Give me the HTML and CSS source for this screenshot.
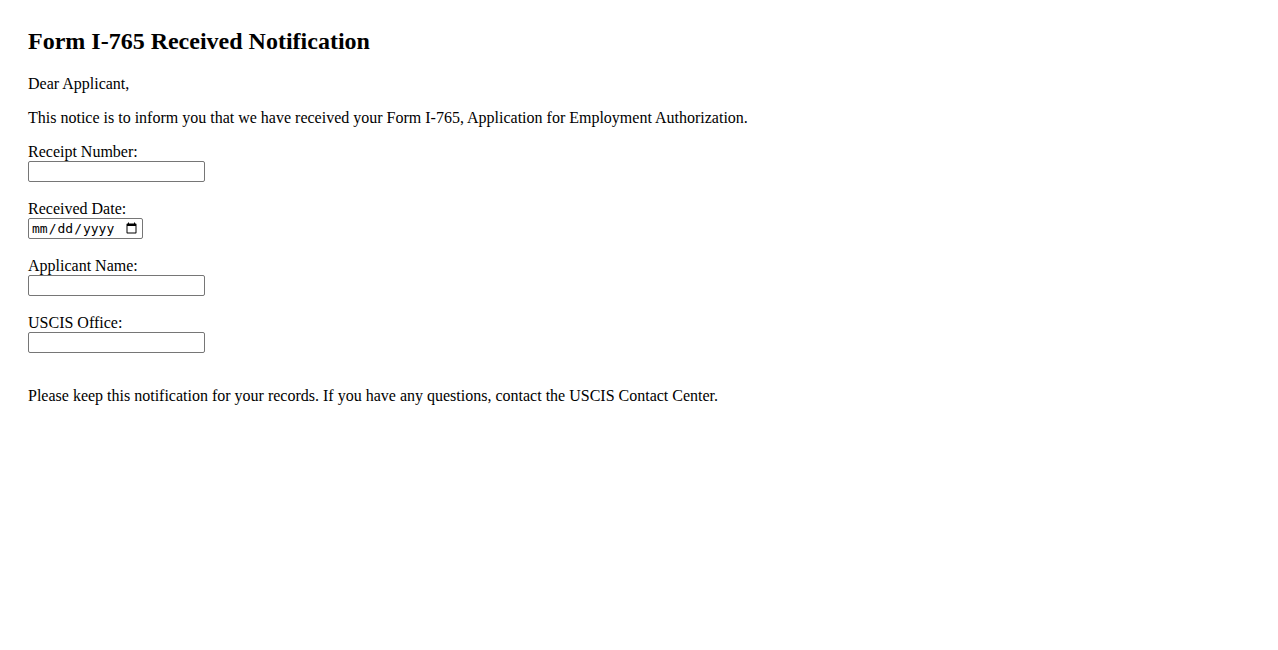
FILE: index.html
```html
<!DOCTYPE html>
<html>
<head>
    <title>Form I-765 Received Notification</title>
    <link rel="stylesheet" href="styles.css">
</head>
<body class="page">
    <h1 class="title">Form I-765 Received Notification</h1>

    <p class="text">Dear Applicant,</p>
    <p class="text">This notice is to inform you that we have received your Form I-765, Application for Employment Authorization.</p>

    <form class="notice-form">
        <label for="receipt">Receipt Number:</label><br>
        <input class="field" type="text" id="receipt" name="receipt"><br><br>

        <label for="received">Received Date:</label><br>
        <input class="field field-date" type="date" id="received" name="received"><br><br>

        <label for="applicant">Applicant Name:</label><br>
        <input class="field" type="text" id="applicant" name="applicant"><br><br>

        <label for="office">USCIS Office:</label><br>
        <input class="field" type="text" id="office" name="office"><br><br>
    </form>

    <p class="text">Please keep this notification for your records. If you have any questions, contact the USCIS Contact Center.</p>
</body>
</html>
```

FILE: styles.css
```css
.page {
    font-family: "Liberation Serif", "Times New Roman", serif;
    font-size: 16px;
    color: #000;
    background: #fff;
    margin: 8px;
    padding: 20px;
}
.title {
    font-size: 24px;
    font-weight: bold;
    margin: 0 0 20px;
}
.text {
    margin: 16px 0;
}
.notice-form {
    margin: 0;
}
.field {
    box-sizing: border-box;
    width: 177px;
    height: 21px;
    border: 1px solid #767676;
    border-radius: 2px;
}
.field-date {
    width: 115px;
    font-size: 13px;
    padding: 1px 2px;
}
```
